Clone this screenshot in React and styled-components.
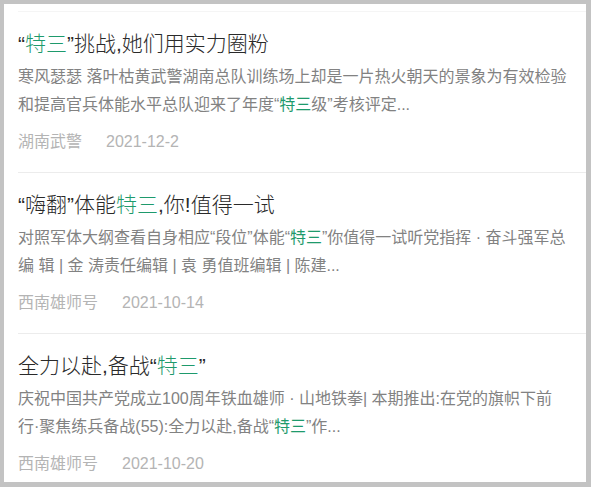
import styled, { createGlobalStyle } from 'styled-components'

const Global = createGlobalStyle`
  body {
    margin: 0;
    background: #c3c3c3;
    font-family: "Liberation Sans", "Noto Sans CJK SC", sans-serif;
  }
`

const Frame = styled.div`
  padding: 4px 5px 0 4px;
`

const Panel = styled.div`
  background: #fff;
  height: 478px;
  overflow: hidden;
  padding-top: 7px;
  box-sizing: border-box;
`

const Item = styled.div`
  margin-left: 14px;
  border-top: 1px solid ${props => props.first ? '#f5f5f5' : '#ececec'};
  padding: 17px 14px 18px 0;
`

const Title = styled.div`
  font-size: 21px;
  font-weight: 300;
  line-height: 30px;
  color: #2a2a2a;
  margin-bottom: 4px;
  white-space: nowrap;
`

const Desc = styled.div`
  font-size: 16px;
  line-height: 28px;
  color: #828282;
`

const Line = styled.div`
  white-space: nowrap;
`

const Hl = styled.span`
  color: #1e9a6c;
`

const Meta = styled.div`
  display: flex;
  gap: 24px;
  margin-top: 11px;
  font-size: 16px;
  line-height: 24px;
  color: #b4b4b4;
`

const items = [
  {
    title: '“特三”挑战,她们用实力圈粉',
    lines: [
      '寒风瑟瑟 落叶枯黄武警湖南总队训练场上却是一片热火朝天的景象为有效检验',
      '和提高官兵体能水平总队迎来了年度“特三级”考核评定...',
    ],
    source: '湖南武警',
    date: '2021-12-2',
  },
  {
    title: '“嗨翻”体能特三,你!值得一试',
    lines: [
      '对照军体大纲查看自身相应“段位”体能“特三”你值得一试听党指挥 · 奋斗强军总',
      '编 辑 | 金 涛责任编辑 | 袁 勇值班编辑 | 陈建...',
    ],
    source: '西南雄师号',
    date: '2021-10-14',
  },
  {
    title: '全力以赴,备战“特三”',
    lines: [
      '庆祝中国共产党成立100周年铁血雄师 · 山地铁拳| 本期推出:在党的旗帜下前',
      '行·聚焦练兵备战(55):全力以赴,备战“特三”作...',
    ],
    source: '西南雄师号',
    date: '2021-10-20',
  },
]

// 把“特三”标成绿色
const mark = text => {
  const parts = text.split('特三')
  return parts.map((p, i) => (
    <span key={i}>
      {p}
      {i < parts.length - 1 && <Hl>特三</Hl>}
    </span>
  ))
}

function App() {
  return (
    <Frame>
      <Global />
      <Panel>
        {items.map((it, i) => (
          <Item key={i} first={i === 0}>
            <Title>{mark(it.title)}</Title>
            <Desc>
              {it.lines.map((l, j) => <Line key={j}>{mark(l)}</Line>)}
            </Desc>
            <Meta>
              <span>{it.source}</span>
              <span>{it.date}</span>
            </Meta>
          </Item>
        ))}
      </Panel>
    </Frame>
  )
}

export default App
